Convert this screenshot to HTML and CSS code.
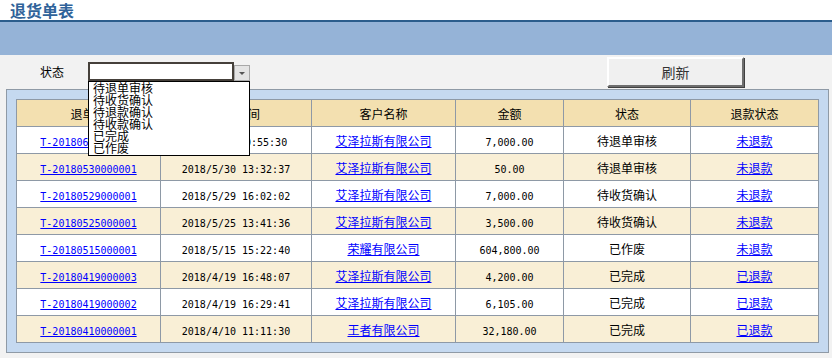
FILE: index.html
```html
<!DOCTYPE html>
<html lang="zh-CN">
<head>
  <meta charset="UTF-8" />
  <title>退货单表</title>
  <link rel="stylesheet" href="styles.css">
</head>
<body>

  <div class="page-title">退货单表</div>
  <div class="band"></div>

  <div class="toolbar">
    <span class="label">状态</span>
    <div class="combo">
      <div class="combo-box"></div>
      <div class="combo-arrow"></div>
      <ul class="combo-list">
        <li>待退单审核</li>
        <li>待收货确认</li>
        <li>待退款确认</li>
        <li>待收款确认</li>
        <li>已完成</li>
        <li>已作废</li>
      </ul>
    </div>
    <button class="btn-refresh">刷新</button>
  </div>

  <div class="panel">
    <table class="grid">
      <colgroup>
        <col style="width:144px">
        <col style="width:151px">
        <col style="width:144px">
        <col style="width:108px">
        <col style="width:127px">
        <col style="width:128px">
      </colgroup>
      <thead>
        <tr>
          <th>退单号</th>
          <th>退单时间</th>
          <th>客户名称</th>
          <th>金额</th>
          <th>状态</th>
          <th>退款状态</th>
        </tr>
      </thead>
      <tbody>
        <tr>
          <td><a class="num" href="#">T-20180601000001</a></td>
          <td><span class="num">2018/6/1 10:55:30</span></td>
          <td><a href="#">艾泽拉斯有限公司</a></td>
          <td><span class="num">7,000.00</span></td>
          <td>待退单审核</td>
          <td><a href="#">未退款</a></td>
        </tr>
        <tr>
          <td><a class="num" href="#">T-20180530000001</a></td>
          <td><span class="num">2018/5/30 13:32:37</span></td>
          <td><a href="#">艾泽拉斯有限公司</a></td>
          <td><span class="num">50.00</span></td>
          <td>待退单审核</td>
          <td><a href="#">未退款</a></td>
        </tr>
        <tr>
          <td><a class="num" href="#">T-20180529000001</a></td>
          <td><span class="num">2018/5/29 16:02:02</span></td>
          <td><a href="#">艾泽拉斯有限公司</a></td>
          <td><span class="num">7,000.00</span></td>
          <td>待收货确认</td>
          <td><a href="#">未退款</a></td>
        </tr>
        <tr>
          <td><a class="num" href="#">T-20180525000001</a></td>
          <td><span class="num">2018/5/25 13:41:36</span></td>
          <td><a href="#">艾泽拉斯有限公司</a></td>
          <td><span class="num">3,500.00</span></td>
          <td>待收货确认</td>
          <td><a href="#">未退款</a></td>
        </tr>
        <tr>
          <td><a class="num" href="#">T-20180515000001</a></td>
          <td><span class="num">2018/5/15 15:22:40</span></td>
          <td><a href="#">荣耀有限公司</a></td>
          <td><span class="num">604,800.00</span></td>
          <td>已作废</td>
          <td><a href="#">未退款</a></td>
        </tr>
        <tr>
          <td><a class="num" href="#">T-20180419000003</a></td>
          <td><span class="num">2018/4/19 16:48:07</span></td>
          <td><a href="#">艾泽拉斯有限公司</a></td>
          <td><span class="num">4,200.00</span></td>
          <td>已完成</td>
          <td><a href="#">已退款</a></td>
        </tr>
        <tr>
          <td><a class="num" href="#">T-20180419000002</a></td>
          <td><span class="num">2018/4/19 16:29:41</span></td>
          <td><a href="#">艾泽拉斯有限公司</a></td>
          <td><span class="num">6,105.00</span></td>
          <td>已完成</td>
          <td><a href="#">已退款</a></td>
        </tr>
        <tr>
          <td><a class="num" href="#">T-20180410000001</a></td>
          <td><span class="num">2018/4/10 11:11:30</span></td>
          <td><a href="#">王者有限公司</a></td>
          <td><span class="num">32,180.00</span></td>
          <td>已完成</td>
          <td><a href="#">已退款</a></td>
        </tr>
      </tbody>
    </table>
  </div>

</body>
</html>
```

FILE: styles.css
```css
* {
  box-sizing: border-box;
}

body {
  margin: 0;
  background: #f2f2f2;
  font-family: "Noto Sans CJK SC", "Noto Sans", sans-serif;
  font-size: 12px;
  color: #000;
}

.page-title {
  height: 22px;
  padding: 0 0 0 10px;
  background: #fff;
  border-bottom: 2px solid #2b5d8c;
  color: #30639a;
  font-size: 16px;
  font-weight: bold;
  line-height: 20px;
}

.band {
  height: 33px;
  background: #95b3d7;
}

.toolbar {
  height: 34px;
  display: flex;
  align-items: flex-start;
  padding-left: 40px;
}

.label {
  width: 48px;
  margin-top: 10px;
  line-height: 14px;
}

.combo {
  position: relative;
  display: flex;
  width: 162px;
  margin-top: 7px;
}

.combo-box {
  width: 146px;
  height: 19px;
  background: #fff;
  border: 2px solid #45403a;
}

.combo-arrow {
  width: 16px;
  height: 16px;
  margin-top: 3px;
  background: #e4e4e4;
  border: 1px solid #a8a8a8;
  position: relative;
}

.combo-arrow::after {
  content: "";
  position: absolute;
  left: 4px;
  top: 6px;
  border-left: 3px solid transparent;
  border-right: 3px solid transparent;
  border-top: 3px solid #555;
}

.combo-list {
  position: absolute;
  top: 19px;
  left: 0;
  width: 162px;
  margin: 0;
  padding: 0 0 1px 4px;
  list-style: none;
  background: #fff;
  border: 1px solid #000;
  z-index: 5;
}

.combo-list li {
  height: 12px;
  line-height: 12px;
  font-size: 12px;
  white-space: nowrap;
}

.btn-refresh {
  width: 137px;
  height: 30px;
  margin: 2px 0 0 357px;
  padding: 0;
  background: #f0f0f0;
  border: 2px solid;
  border-color: #fff #6e6e6e #6e6e6e #fff;
  box-shadow: 1px 1px 0 #404040;
  font-family: inherit;
  font-size: 14px;
  color: #333;
}

.panel {
  width: 823px;
  margin-left: 6px;
  padding: 9px 10px 9px 9px;
  background: #c5d9f0;
  border: 1px solid #8f9aa6;
}

.grid {
  width: 802px;
  border-collapse: collapse;
  table-layout: fixed;
  background: #fff;
}

.grid th,
.grid td {
  height: 27px;
  padding: 0;
  border: 1px solid #8e99a6;
  text-align: center;
  vertical-align: middle;
  font-weight: normal;
  white-space: nowrap;
  overflow: hidden;
}

.grid th {
  background: #f3e0b0;
}

.grid tbody tr:nth-child(even) td {
  background: #f9efd6;
}

.grid a {
  color: #0000ff;
  text-decoration: underline;
}

.num {
  font-family: "DejaVu Sans Mono", monospace;
  font-size: 10px;
}
```
